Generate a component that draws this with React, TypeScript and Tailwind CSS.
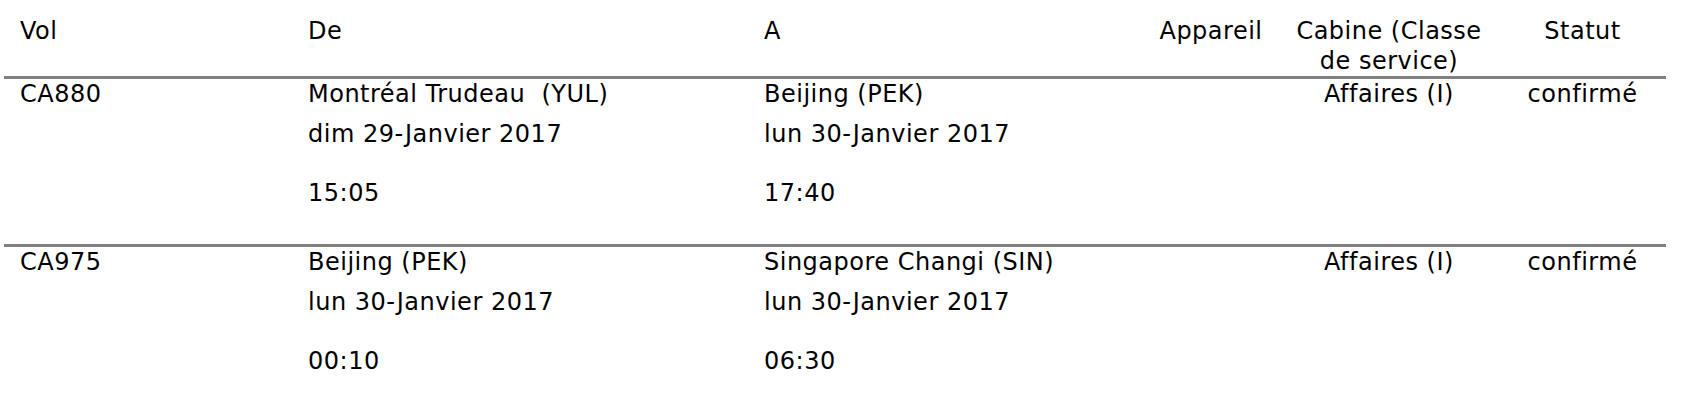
const flights = [
  {
    vol: "CA880",
    from: { place: "Montréal Trudeau\u00a0 (YUL)", date: "dim 29-Janvier 2017", time: "15:05" },
    to: { place: "Beijing (PEK)", date: "lun 30-Janvier 2017", time: "17:40" },
    aircraft: "",
    cabin: "Affaires (I)",
    status: "confirmé",
  },
  {
    vol: "CA975",
    from: { place: "Beijing (PEK)", date: "lun 30-Janvier 2017", time: "00:10" },
    to: { place: "Singapore Changi (SIN)", date: "lun 30-Janvier 2017", time: "06:30" },
    aircraft: "",
    cabin: "Affaires (I)",
    status: "confirmé",
  },
];

function Stop({ place, date, time }: { place: string; date: string; time: string }) {
  return (
    <div>
      <div>{place}</div>
      <div className="mt-[10px]">{date}</div>
      <div className="mt-[29px]">{time}</div>
    </div>
  );
}

export default function App() {
  const th = "font-normal align-top pt-[16px] px-4 border-b-[3px] border-[#808080]";
  const td = "align-top px-4 pt-0 pb-[36px] border-b-[3px] border-[#808080]";

  return (
    <div className="w-[1682px] h-[406px] bg-white text-black overflow-hidden font-['DejaVu_Sans',sans-serif] text-[24px] leading-[30px] tracking-[0.5px]">
      <table className="ml-[4px] w-[1662px] table-fixed border-collapse">
        <thead>
          <tr>
            <th className={`${th} w-[288px] text-left`}>Vol</th>
            <th className={`${th} w-[456px] text-left`}>De</th>
            <th className={`${th} w-[395px] text-left`}>A</th>
            <th className={`${th} w-[136px] text-center`}>Appareil</th>
            <th className={`${th} w-[220px] text-center`}>
              Cabine (Classe
              <br />
              de service)
            </th>
            <th className={`${th} w-[167px] text-center`}>Statut</th>
          </tr>
        </thead>
        <tbody>
          {flights.map((f, i) => {
            const last = i === flights.length - 1 ? "border-b-0" : "";
            return (
              <tr key={f.vol}>
                <td className={`${td} ${last}`}>{f.vol}</td>
                <td className={`${td} ${last}`}>
                  <Stop {...f.from} />
                </td>
                <td className={`${td} ${last}`}>
                  <Stop {...f.to} />
                </td>
                <td className={`${td} text-center ${last}`}>{f.aircraft}</td>
                <td className={`${td} text-center ${last}`}>{f.cabin}</td>
                <td className={`${td} text-center ${last}`}>{f.status}</td>
              </tr>
            );
          })}
        </tbody>
      </table>
    </div>
  );
}
